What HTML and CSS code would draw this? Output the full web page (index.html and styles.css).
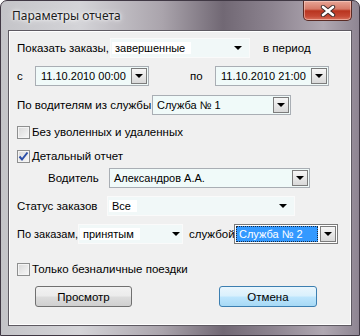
FILE: index.html
```html
<!DOCTYPE html>
<html lang="ru">
<head>
    <meta charset="UTF-8">
    <title>Параметры отчета</title>
    <link rel="stylesheet" href="styles.css">
</head>
<body>

<div class="window">
    <div class="titlebar">
        <span class="title">Параметры отчета</span>
        <div class="close">
            <svg width="16" height="12" viewBox="0 0 16 12">
                <path d="M3 2 L13 10 M13 2 L3 10" stroke="#3a2a2a" stroke-width="4.4" stroke-linecap="round"/>
                <path d="M3 2 L13 10 M13 2 L3 10" stroke="#ffffff" stroke-width="2.6" stroke-linecap="round"/>
            </svg>
        </div>
    </div>

    <div class="client">
        <!-- what and when -->
        <div class="row r1">
            <span class="lbl w-show">Показать заказы,</span>
            <div class="combo flat c-state"><span class="val">завершенные</span><i class="arrow"></i></div>
            <span class="lbl after-state">в период</span>
        </div>
        <div class="row r2">
            <span class="lbl w-from">с</span>
            <div class="combo date"><span class="val">11.10.2010 00:00</span><span class="btn"><i class="arrow"></i></span></div>
            <span class="lbl w-to">по</span>
            <div class="combo date"><span class="val">11.10.2010 21:00</span><span class="btn"><i class="arrow"></i></span></div>
        </div>
        <div class="row r3">
            <span class="lbl w-drivers">По водителям из службы</span>
            <div class="combo c-service"><span class="val">Служба № 1</span><span class="btn"><i class="arrow"></i></span></div>
        </div>
        <div class="row r4">
            <span class="check"></span>
            <span class="lbl">Без уволенных и удаленных</span>
        </div>
        <div class="row r5">
            <span class="check">
                <svg width="11" height="11" viewBox="0 0 11 11">
                    <path d="M1.5 5.5 L4 8.5 L9.5 1.5" fill="none" stroke="#2b4ea8" stroke-width="2"/>
                </svg>
            </span>
            <span class="lbl">Детальный отчет</span>
        </div>
        <div class="row r6">
            <span class="lbl w-driver">Водитель</span>
            <div class="combo c-driver"><span class="val">Александров А.А.</span><span class="btn"><i class="arrow"></i></span></div>
        </div>
        <div class="row r7">
            <span class="lbl w-status">Статус заказов</span>
            <div class="combo flat c-status"><span class="val">Все</span><i class="arrow"></i></div>
        </div>
        <div class="row r8">
            <span class="lbl w-orders">По заказам,</span>
            <div class="combo flat c-taken"><span class="val">принятым</span><i class="arrow"></i></div>
            <span class="lbl w-by">службой</span>
            <div class="combo focus c-service2"><span class="val sel">Служба № 2</span><span class="btn"><i class="arrow"></i></span></div>
        </div>
        <div class="row r9">
            <span class="check"></span>
            <span class="lbl">Только безналичные поездки</span>
        </div>

        <div class="buttons">
            <button class="btn-view">Просмотр</button>
            <button class="btn-cancel">Отмена</button>
        </div>
    </div>
</div>

</body>
</html>
```

FILE: styles.css
```css
body {
    margin: 0;
    font-family: "Liberation Sans", Arial, sans-serif;
    font-size: 11px;
    color: #000;
}
.window {
    width: 360px;
    height: 336px;
    box-sizing: border-box;
    border: 1px solid #403844;
    border-radius: 7px 7px 0 0;
    background: linear-gradient(90deg, #c4c4c8 0%, #d4d4d8 22%, #aaa4ac 45%, #716874 62%, #8d8490 76%, #b0a8b2 90%, #8e8592 100%);
}
.titlebar {
    height: 29px;
    display: flex;
    align-items: flex-start;
}
.title {
    font-family: "Noto Sans", "Open Sans", sans-serif;
    font-size: 12px;
    color: #1c1c1c;
    margin: 6px 0 0 11px;
    text-shadow: 0 0 6px #fff, 0 0 3px #fff;
}
.close {
    margin-left: auto;
    margin-right: 7px;
    width: 49px;
    height: 20px;
    box-sizing: border-box;
    border: 1px solid #5a2a24;
    border-top: none;
    border-radius: 0 0 5px 5px;
    background: linear-gradient(#e7a596 0%, #d67a68 42%, #b9341f 52%, #c54834 80%, #d9735f 100%);
    display: flex;
    align-items: center;
    justify-content: center;
    box-shadow: inset 0 0 0 1px rgba(255, 220, 210, 0.5);
}
.client {
    margin-left: 7px;
    width: 344px;
    height: 296px;
    box-sizing: border-box;
    border: 1px solid #5e5a62;
    box-shadow: inset 0 0 0 1px #ffffff;
    background: #f0f0f0;
    padding: 7px 0 0 8px;
}
.row {
    display: flex;
    align-items: center;
    height: 20px;
}
.r2 { margin-top: 8px; }
.r3 { margin-top: 9px; }
.r4 { margin-top: 9px; height: 16px; }
.r5 { margin-top: 8px; height: 16px; }
.r6 { margin-top: 4px; }
.r7 { margin-top: 8px; }
.r8 { margin-top: 8px; }
.r9 { margin-top: 17px; height: 16px; }

.lbl {
    white-space: nowrap;
    font-size: 11.5px;
}
.w-show { width: 93px; }
.after-state { margin-left: 13px; }
.w-from { width: 18px; }
.w-to { width: 25px; margin-left: 41px; }
.w-drivers { width: 135px; }
.w-driver { width: 61px; margin-left: 31px; }
.w-status { width: 90px; }
.w-orders { width: 61px; font-size: 11px; }
.w-by { width: 45px; margin-left: 6px; }

/* combo boxes */
.combo {
    display: flex;
    align-items: center;
    height: 20px;
    box-sizing: border-box;
    border: 1px solid #a9aeb4;
    background: #f0faf9;
    padding: 1px;
}
.combo .val {
    flex: 1;
    padding-left: 3px;
    white-space: nowrap;
    overflow: hidden;
}
.combo .btn {
    width: 16px;
    height: 16px;
    box-sizing: border-box;
    border: 1px solid #7c7c7c;
    background: linear-gradient(#f6f6f6, #d9d9d9);
    display: flex;
    align-items: center;
    justify-content: center;
}
.arrow {
    width: 0;
    height: 0;
    border-top: 4px solid #000;
    border-left: 4px solid transparent;
    border-right: 4px solid transparent;
}
.flat {
    border-color: #fafafa;
    background: #f1f8f8;
}
.flat .val {
    background: #fff;
    flex: none;
    padding-right: 6px;
}
.flat .arrow {
    margin-left: auto;
    margin-right: 6px;
}
.c-state { width: 140px; height: 20px; }
.date { width: 114px; }
.date .val { padding-left: 4px; }
.c-service { width: 139px; }
.c-driver { width: 201px; }
.c-status { width: 188px; }
.c-taken { width: 105px; }
.c-taken .arrow { margin-right: 1px; }
.c-service2 { width: 104px; }
.focus {
    border-color: #7a7a7a;
    background: #fff;
}
.focus .val.sel {
    background: #3399ff;
    color: #fff;
    border: 1px dotted #1a2a40;
    height: 14px;
    line-height: 14px;
    margin-right: 2px;
    padding-left: 2px;
}

/* checkboxes */
.check {
    width: 13px;
    height: 13px;
    box-sizing: border-box;
    border: 1px solid #8e8f8f;
    background: linear-gradient(135deg, #d8d8d8, #f8f8f8);
    box-shadow: inset 0 0 0 1px #f4f4f4;
    margin-right: 2px;
    display: flex;
    align-items: center;
    justify-content: center;
}
.check svg {
    display: block;
}

/* bottom buttons */
.buttons {
    display: flex;
    margin-top: 9px;
    padding-left: 18px;
}
button {
    font-family: "Liberation Sans", Arial, sans-serif;
    font-size: 11.5px;
    color: #000;
    height: 21px;
    border-radius: 3px;
    padding: 0;
}
.btn-view {
    width: 97px;
    border: 1px solid #707070;
    background: linear-gradient(#f2f2f2 0%, #ebebeb 48%, #dddddd 52%, #cfcfcf 100%);
}
.btn-cancel {
    width: 98px;
    margin-left: 87px;
    border: 1px solid #3c7fb1;
    background: linear-gradient(#eaf6fd 0%, #d9f0fc 48%, #bee6fd 52%, #a7d9f5 100%);
}
```
